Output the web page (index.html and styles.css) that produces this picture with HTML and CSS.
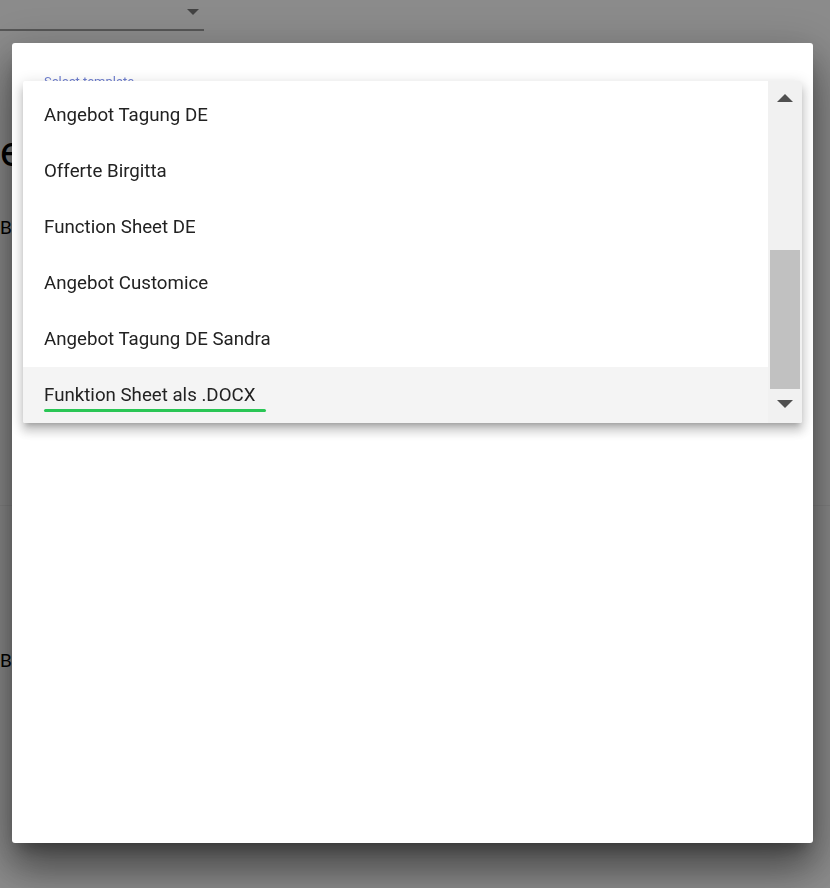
FILE: index.html
```html
<!DOCTYPE html>
<html lang="de">
<head>
<meta charset="utf-8">
<title>Select template</title>
<link rel="stylesheet" href="styles.css">
</head>
<body>
<div class="page">
  <div class="topselect"><span class="caret"></span></div>
  <div class="heading">e</div>
  <div class="label-b">B</div>
  <div class="divider"></div>
  <div class="label-b label-b2">B</div>
</div>

<div class="overlay">
  <div class="modal">
    <div class="field-label">Select template</div>
    <div class="menu">
      <ul class="menu-list">
        <li class="menu-item">Angebot Tagung DE</li>
        <li class="menu-item">Offerte Birgitta</li>
        <li class="menu-item">Function Sheet DE</li>
        <li class="menu-item">Angebot Customice</li>
        <li class="menu-item">Angebot Tagung DE Sandra</li>
        <li class="menu-item is-active"><span class="marked">Funktion Sheet als .DOCX</span></li>
      </ul>
      <div class="scrollbar">
        <div class="sb-btn"><span class="tri-up"></span></div>
        <div class="sb-track"><div class="sb-thumb"></div></div>
        <div class="sb-btn sb-btn-down"><span class="tri-down"></span></div>
      </div>
    </div>
  </div>
</div>
</body>
</html>
```

FILE: styles.css
```css
* { box-sizing: border-box; }

html, body {
  margin: 0;
  padding: 0;
  background: #ffffff;
  font-family: Roboto, "Liberation Sans", sans-serif;
  overflow: hidden;
}

.page {
  width: 830px;
  height: 888px;
  display: flex;
  flex-direction: column;
}

.topselect {
  width: 204px;
  height: 31px;
  border-bottom: 2px solid #9e9e9e;
  display: flex;
  justify-content: flex-end;
  padding: 9px 5px 0 0;
}

.caret {
  width: 0;
  height: 0;
  border-left: 6.5px solid transparent;
  border-right: 6.5px solid transparent;
  border-top: 6px solid #7a7a7a;
}

.heading {
  margin-top: 97px;
  margin-left: 0;
  font-size: 42px;
  line-height: 48px;
  color: #000;
}

.label-b {
  margin-top: 40px;
  margin-left: 0;
  font-size: 19px;
  line-height: 24px;
  color: #000;
}

.divider {
  margin-top: 265px;
  height: 1px;
  background: #f1f1f1;
}

.label-b2 {
  margin-top: 143px;
}

.overlay {
  position: fixed;
  inset: 0;
  background: rgba(0, 0, 0, 0.455);
  padding: 43px 0 0 12px;
}

.modal {
  position: relative;
  width: 801px;
  height: 800px;
  background: #ffffff;
  border-radius: 3px;
  padding: 31px 32px 0 32px;
  box-shadow: 0 11px 15px -7px rgba(0,0,0,.3),
              0 24px 38px 3px rgba(0,0,0,.24),
              0 30px 40px -5px rgba(0,0,0,.22),
              0 9px 46px 8px rgba(0,0,0,.16);
}

.field-label {
  font-size: 13px;
  line-height: 16px;
  color: #6f7fd0;
}

.menu {
  position: absolute;
  left: 11px;
  top: 38px;
  width: 779px;
  height: 342px;
  background: #ffffff;
  border-radius: 2px;
  display: flex;
  overflow: hidden;
  box-shadow: 0 5px 5px -3px rgba(0,0,0,.2),
              0 8px 10px 1px rgba(0,0,0,.14),
              0 3px 14px 2px rgba(0,0,0,.12);
}

.menu-list {
  list-style: none;
  margin: 0;
  padding: 6px 0 0 0;
  flex: 1;
}

.menu-item {
  height: 56px;
  display: flex;
  align-items: center;
  padding-left: 21px;
  font-size: 18.7px;
  color: #222222;
}

.menu-item.is-active {
  background: #f4f4f4;
}

.marked {
  position: relative;
}

.marked::after {
  content: "";
  position: absolute;
  left: 0;
  right: -11px;
  bottom: -6px;
  height: 3px;
  border-radius: 2px;
  background: #2ac655;
}

.scrollbar {
  width: 34px;
  background: #f1f1f1;
  display: flex;
  flex-direction: column;
}

.sb-btn {
  height: 34px;
  display: flex;
  align-items: center;
  justify-content: center;
}

.sb-btn-down {
  align-items: flex-start;
  padding-top: 11px;
}

.tri-up {
  width: 0;
  height: 0;
  border-left: 8px solid transparent;
  border-right: 8px solid transparent;
  border-bottom: 8px solid #505050;
}

.tri-down {
  width: 0;
  height: 0;
  border-left: 8px solid transparent;
  border-right: 8px solid transparent;
  border-top: 8px solid #505050;
}

.sb-track {
  flex: 1;
  display: flex;
  flex-direction: column;
  justify-content: flex-end;
  padding: 0 2px;
}

.sb-thumb {
  height: 139px;
  background: #c1c1c1;
}
```
